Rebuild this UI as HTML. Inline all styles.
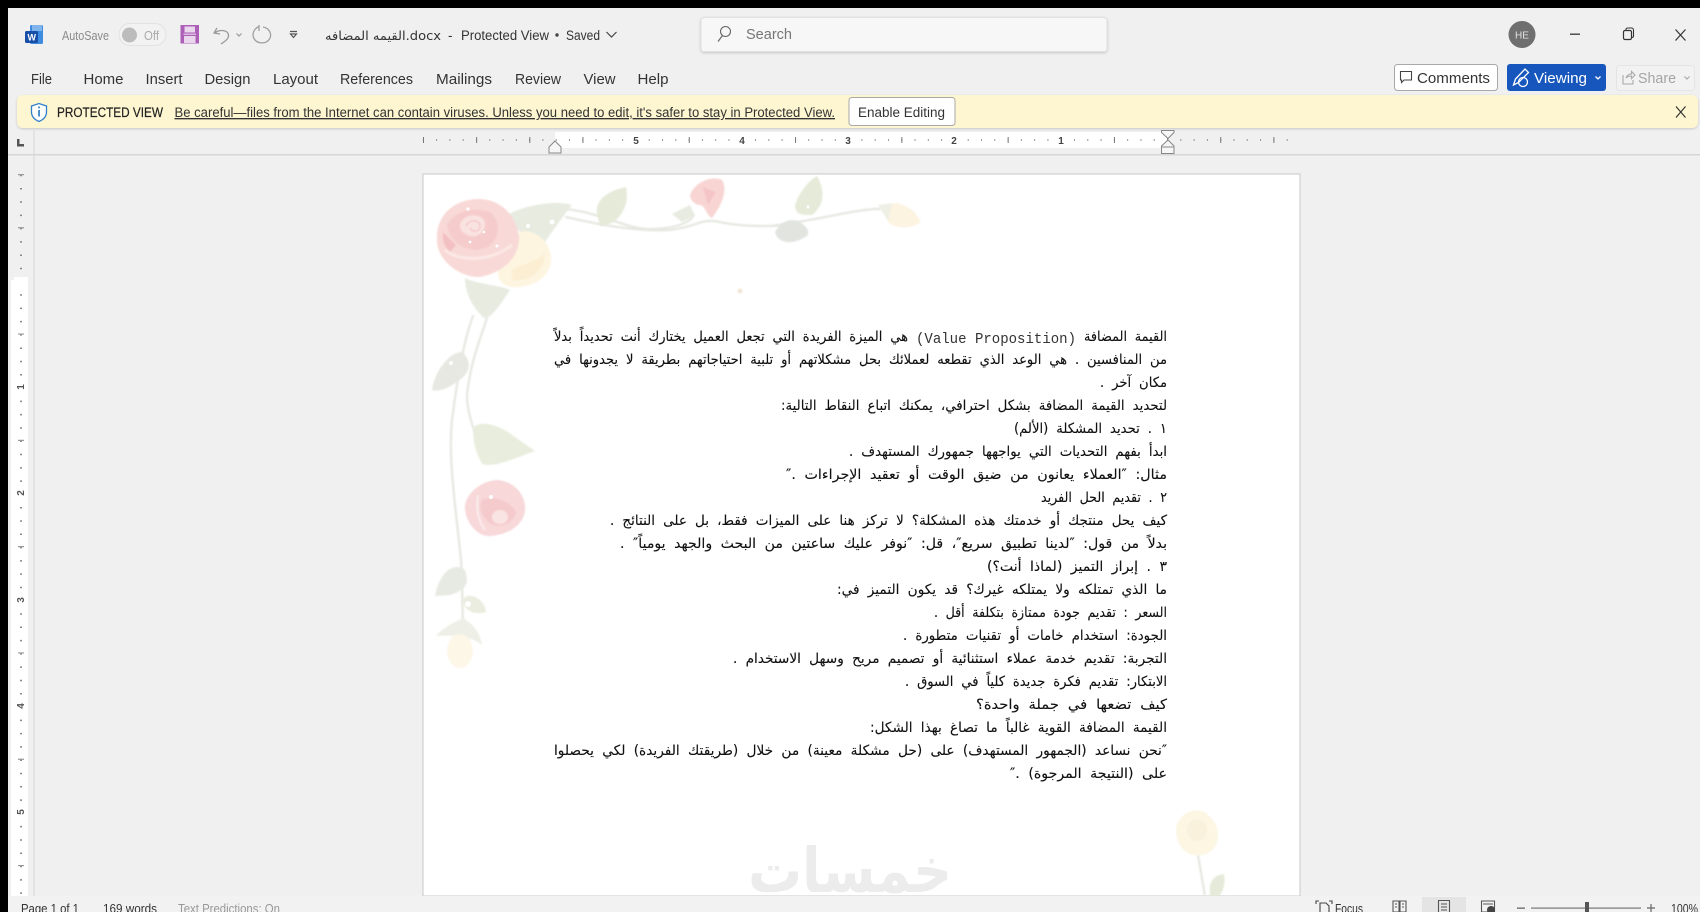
<!DOCTYPE html>
<html lang="en"><head><meta charset="utf-8"><title>Word</title>
<style>
html,body{margin:0;padding:0;width:1700px;height:912px;overflow:hidden;background:#000}
svg{display:block;position:absolute;left:0;top:0;filter:blur(.3px)}
.ui{font-family:"Liberation Sans",sans-serif;font-size:14px;fill:#333}
.ar{font-family:"DejaVu Sans","Liberation Serif",serif;font-size:14px;fill:#111;word-spacing:4px;stroke:#111;stroke-width:.12px}
.mono{font-family:"Liberation Mono",monospace;font-size:15px;fill:#333}
</style></head><body>
<svg width="1700" height="912" viewBox="0 0 1700 912" xmlns="http://www.w3.org/2000/svg">
<defs>
<filter id="b1" x="-20%" y="-20%" width="140%" height="140%"><feGaussianBlur stdDeviation=".8"/></filter>
<filter id="b2" x="-20%" y="-20%" width="140%" height="140%"><feGaussianBlur stdDeviation="2.2"/></filter>
<filter id="s" x="-5%" y="-20%" width="110%" height="150%"><feDropShadow dx="0" dy="1" stdDeviation="1.2" flood-color="#000" flood-opacity=".18"/></filter>
</defs>
<rect width="1700" height="912" fill="#000"/>
<rect x="8" y="8" width="1692" height="904" fill="#f0f0f0"/>

<!-- title bar -->
<rect x="30" y="25" width="13" height="19" rx="1.500" fill="#3f8be0"/>
<rect x="32" y="25" width="10" height="6" fill="#7fb4ec"/>
<rect x="25" y="31" width="13" height="12" rx="1.500" fill="#174fa8"/>
<text x="27.500" y="40.500" font-family="Liberation Sans" font-size="9" font-weight="700" fill="#fff">W</text>
<text class="ui" x="62" y="40" style="font-size:12.500px;fill:#8a8a8a" textLength="47" lengthAdjust="spacingAndGlyphs">AutoSave</text>
<rect x="119" y="23.500" width="47" height="22" rx="11" fill="#f2f2f2" stroke="#e2e2e2"/>
<circle cx="129.500" cy="35" r="7.500" fill="#bcbcbc"/>
<text class="ui" x="144" y="40" style="font-size:12.500px;fill:#ababab" textLength="15" lengthAdjust="spacingAndGlyphs">Off</text>
<rect x="180.500" y="25" width="18.500" height="18.500" fill="#ad5fb8"/>
<rect x="184.500" y="26.500" width="10.500" height="6" fill="#e9d6ec"/>
<rect x="184" y="36" width="11.500" height="7" fill="#e9d6ec"/>
<rect x="183.500" y="33.500" width="12.500" height="1.500" fill="#d9bbde"/>
<path d="M217 28 L214 33 L220 34 M214.500 33 C220 29 228 30 228.500 35 C229 39 224 42 221 44" fill="none" stroke="#9a9a9a" stroke-width="1.300"/>
<path d="M236.500 33.500l2.500 2.500 2.500-2.500" fill="none" stroke="#9a9a9a" stroke-width="1.200"/>
<path d="M259 26.500 C253 29 252 35 254 38.500 C257 44 266 44.500 269.500 39 C272.500 34 269 28 263 27 M259 25 L259 31" fill="none" stroke="#a0a0a0" stroke-width="1.300"/>
<path d="M290 31.500h7M290.500 34l3 3.500 3-3.500z" fill="none" stroke="#555" stroke-width="1.200"/>
<text class="ui" x="325" y="40" style="font-family:'DejaVu Sans','Liberation Sans',sans-serif;font-size:12.500px;fill:#333" textLength="116" lengthAdjust="spacingAndGlyphs">القيمه المضافه.docx</text>
<text class="ui" x="448" y="40" style="font-size:13.500px">-</text>
<text class="ui" x="461" y="40" style="font-size:13.500px" textLength="88" lengthAdjust="spacingAndGlyphs">Protected View</text>
<circle cx="557" cy="35" r="1.700" fill="#444"/>
<text class="ui" x="566" y="40" style="font-size:13.500px" textLength="34" lengthAdjust="spacingAndGlyphs">Saved</text>
<path d="M606.500 32l5 5 5-5" fill="none" stroke="#444" stroke-width="1.200"/>

<rect x="701" y="17.500" width="406" height="34" rx="3" fill="#f7f7f7" stroke="#e0e0e0" filter="url(#s)"/>
<circle cx="725.500" cy="31.500" r="5" fill="none" stroke="#666" stroke-width="1.100"/>
<path d="M722.500 35.500l-4.500 6" stroke="#666" stroke-width="1.200"/>
<text class="ui" x="746" y="39" style="font-size:14.500px;fill:#767676" textLength="46" lengthAdjust="spacingAndGlyphs">Search</text>

<circle cx="1522" cy="34.500" r="13.500" fill="#6f6f6f"/>
<text x="1522" y="38.500" text-anchor="middle" font-family="Liberation Sans" font-size="10" fill="#e4e4e4">HE</text>
<rect x="1570" y="33.500" width="10" height="1.400" fill="#444"/>
<rect x="1623.500" y="30.500" width="8" height="9" rx="1.500" fill="none" stroke="#333" stroke-width="1.200"/>
<path d="M1626 30 v-1 a1.500 1.500 0 0 1 1.500-1 h4 a2 2 0 0 1 2 2 v6 a1.500 1.500 0 0 1-1.500 1.500" fill="none" stroke="#333" stroke-width="1.100"/>
<path d="M1675.500 29.500l10 11M1685.500 29.500l-10 11" stroke="#333" stroke-width="1.200"/>

<!-- tabs -->
<text class="ui" style="font-size:15px" x="31" y="84" textLength="21" lengthAdjust="spacingAndGlyphs">File</text>
<text class="ui" style="font-size:15px" x="83.500" y="84" textLength="40" lengthAdjust="spacingAndGlyphs">Home</text>
<text class="ui" style="font-size:15px" x="145.500" y="84" textLength="37" lengthAdjust="spacingAndGlyphs">Insert</text>
<text class="ui" style="font-size:15px" x="204.500" y="84" textLength="46" lengthAdjust="spacingAndGlyphs">Design</text>
<text class="ui" style="font-size:15px" x="273" y="84" textLength="45" lengthAdjust="spacingAndGlyphs">Layout</text>
<text class="ui" style="font-size:15px" x="340" y="84" textLength="73" lengthAdjust="spacingAndGlyphs">References</text>
<text class="ui" style="font-size:15px" x="436" y="84" textLength="56" lengthAdjust="spacingAndGlyphs">Mailings</text>
<text class="ui" style="font-size:15px" x="515" y="84" textLength="46" lengthAdjust="spacingAndGlyphs">Review</text>
<text class="ui" style="font-size:15px" x="583.500" y="84" textLength="32" lengthAdjust="spacingAndGlyphs">View</text>
<text class="ui" style="font-size:15px" x="637.500" y="84" textLength="31" lengthAdjust="spacingAndGlyphs">Help</text>

<!-- right ribbon -->
<rect x="1394.500" y="64.500" width="103" height="26" rx="3" fill="#fff" stroke="#a8a8a8"/>
<path d="M1400.500 71.500h11v8.500h-7.500l-2.500 2.500v-2.500h-1z" fill="none" stroke="#444" stroke-width="1.100"/>
<text class="ui" x="1417" y="83" style="font-size:15px" textLength="73" lengthAdjust="spacingAndGlyphs">Comments</text>
<rect x="1507" y="64" width="99" height="27" rx="3" fill="#1757bd"/>
<path d="M1513.500 85 l2-6 9.500-10 3.500 3.500 -10 10z" fill="none" stroke="#fff" stroke-width="1.300"/>
<circle cx="1523" cy="82" r="4.500" fill="none" stroke="#fff" stroke-width="1.300"/>
<text class="ui" x="1534" y="83" style="font-size:15px;fill:#fff" textLength="53" lengthAdjust="spacingAndGlyphs">Viewing</text>
<path d="M1595.500 76.500l2.500 2.500 2.500-2.500" fill="none" stroke="#fff" stroke-width="1.300"/>
<rect x="1616.500" y="65.500" width="78" height="25" rx="3" fill="#f2f2f2" stroke="#e4e4e4"/>
<path d="M1623 75v9h10v-4M1626 78c1-3 3-4 5.500-4v-2.500l3.500 3.500-3.500 3.500v-2.500c-2.500 0-4 .5-5.500 2z" fill="none" stroke="#a8a8a8" stroke-width="1.100"/>
<text class="ui" x="1638" y="83" style="font-size:15px;fill:#a4a4a4" textLength="38" lengthAdjust="spacingAndGlyphs">Share</text>
<path d="M1684.500 76.500l2.500 2.500 2.500-2.500" fill="none" stroke="#aaa" stroke-width="1.200"/>

<!-- protected bar -->
<rect x="17" y="95" width="1681" height="33" rx="6" fill="#fdf6d0" filter="url(#s)"/>
<path d="M31.500 106 l7.500-2.500 7.500 2.500 v6 c0 5-4 8-7.500 9.500 c-3.500-1.500-7.500-4.500-7.500-9.500z" fill="#fff" stroke="#2f7fc9" stroke-width="1.300"/>
<rect x="38.200" y="110" width="1.700" height="6.500" fill="#2f7fc9"/><rect x="38.200" y="106.500" width="1.700" height="1.800" fill="#2f7fc9"/>
<text class="ui" x="57" y="117" style="font-size:13.500px;fill:#222" stroke="#222" stroke-width=".2" textLength="106" lengthAdjust="spacingAndGlyphs">PROTECTED VIEW</text>
<text class="ui" x="174.500" y="117" style="font-size:13.500px;text-decoration:underline;fill:#333" textLength="660.500" lengthAdjust="spacingAndGlyphs">Be careful—files from the Internet can contain viruses. Unless you need to edit, it's safer to stay in Protected View.</text>
<rect x="849" y="97.500" width="106" height="28" rx="3" fill="#fff" stroke="#a8a8a8"/>
<text class="ui" x="858" y="117" style="font-size:13.500px" textLength="87" lengthAdjust="spacingAndGlyphs">Enable Editing</text>
<path d="M1676 106.500l9.500 11M1685.500 106.500l-9.500 11" stroke="#333" stroke-width="1.200"/>

<!-- ruler area -->
<rect x="33" y="129" width="2" height="767" fill="#e3e3e3"/>
<rect x="8" y="154" width="1692" height="1.500" fill="#d6d6d6"/>
<path d="M17 139h2.500v5h4.500v2.500h-7z" fill="#555"/>
<rect x="555" y="132" width="612" height="16" fill="#fff"/>
<line x1="422.800" y1="140" x2="1290" y2="140" stroke="#777" stroke-width="1.500" stroke-dasharray="1 12.290"/>
<line x1="423" y1="140" x2="1290" y2="140" stroke="#777" stroke-width="6" stroke-dasharray="1 52.150"/>
<g font-family="Liberation Sans" font-size="10" font-weight="700" fill="#444" text-anchor="middle">
<rect x="631" y="133" width="10" height="14" fill="#fff"/><text x="636" y="144">5</text>
<rect x="737" y="133" width="10" height="14" fill="#fff"/><text x="742" y="144">4</text>
<rect x="843" y="133" width="10" height="14" fill="#fff"/><text x="848" y="144">3</text>
<rect x="949" y="133" width="10" height="14" fill="#fff"/><text x="954" y="144">2</text>
<rect x="1056" y="133" width="10" height="14" fill="#fff"/><text x="1061" y="144">1</text>
</g>
<path d="M555 141l6 6v6h-12v-6z" fill="#f6f6f6" stroke="#888"/>
<path d="M1161.500 130.500h12.500v2l-6 6-6.500-6zM1168 140l6 6v7.500h-12.500v-7.500zM1161.500 147h12.500" fill="#f6f6f6" stroke="#888"/>

<!-- vertical ruler -->
<rect x="11" y="280" width="17" height="616" fill="#fff"/>
<line x1="21" y1="174.700" x2="21" y2="896" stroke="#888" stroke-width="2" stroke-dasharray="1.500 11.790"/>
<line x1="21" y1="174" x2="21" y2="896" stroke="#999" stroke-width="6" stroke-dasharray="1.200 51.950"/>
<rect x="14" y="277" width="14" height="8" fill="#fff"/>
<g font-family="Liberation Sans" font-size="10" font-weight="700" fill="#555" text-anchor="middle">
<rect x="14" y="381" width="14" height="12" fill="#fff"/><text transform="translate(24 387) rotate(-90)">1</text>
<rect x="14" y="487" width="14" height="12" fill="#fff"/><text transform="translate(24 493) rotate(-90)">2</text>
<rect x="14" y="594" width="14" height="12" fill="#fff"/><text transform="translate(24 600) rotate(-90)">3</text>
<rect x="14" y="700" width="14" height="12" fill="#fff"/><text transform="translate(24 706) rotate(-90)">4</text>
<rect x="14" y="806" width="14" height="12" fill="#fff"/><text transform="translate(24 812) rotate(-90)">5</text>
</g>

<!-- page -->
<rect x="423" y="174" width="877" height="722" fill="#fff" stroke="#c9c9c9"/>

<!-- flowers -->
<g>
<g fill="none" stroke="#e6e8e1" stroke-width="2.300" stroke-linecap="round" filter="url(#b1)">
<path d="M565 209 C600 212 625 229 650 229 C680 229 700 218 690 212 M566 217 C600 225 640 232 670 230 C700 226 700 218 720 222 C745 228 790 226 800 224 M770 226 C810 222 860 208 880 209"/>
<path d="M473 316 C462 345 456 390 452 420 C448 460 456 510 461 560 C463 600 462 620 464 640"/>
<path d="M487 318 C478 345 470 365 467 395 C467 410 472 425 476 435"/>
<path d="M1198 855 L1205 896"/>
</g>
<g filter="url(#b1)">
<!-- leaves -->
<path d="M507 215 C525 205 555 200 572 205 C560 220 550 235 545 242 C530 240 515 232 507 215Z" fill="#e7ebe0"/>
<path d="M598 218 C592 198 612 190 626 187 C630 205 620 225 600 226Z" fill="#e6ead9"/>
<path d="M795 205 C800 190 810 180 817 176 C825 190 825 205 812 215 C802 215 795 215 795 205Z" fill="#e6ead9"/>
<path d="M775 232 C785 215 800 218 808 230 L808 235 C795 245 778 245 775 232Z" fill="#e1e4df"/>
<path d="M465 278 C480 285 500 285 510 290 C500 305 490 320 484 318 C470 305 465 290 465 278Z" fill="#e7ebe0"/>
<path d="M432 390 C435 370 450 352 462 352 C472 360 470 372 462 378 C450 388 440 392 432 390Z" fill="#e6e8e1"/>
<path d="M474 427 C480 420 500 425 512 435 L535 451 C515 458 495 468 482 464 C475 450 472 440 474 427Z" fill="#e9eddd"/>
<path d="M435 596 C440 570 455 562 465 570 C470 585 465 590 450 595Z" fill="#e7eae2"/>
<path d="M462 600 C470 590 485 600 486 612 C475 615 465 612 462 600Z" fill="#eaeddf"/>
<path d="M436 636 C445 625 460 620 463 618 C470 622 480 630 482 645 C470 635 450 635 436 636Z" fill="#eef0e7"/>
<path d="M1210 896 C1208 880 1215 875 1224 874 C1226 885 1222 895 1218 896Z" fill="#e6ead9"/>
<!-- yellow rose -->
<path d="M498 272 C505 255 512 232 525 231 C545 233 552 250 551 262 C548 280 530 288 512 287 C503 286 498 280 498 272Z" fill="#fdf5e0"/>
<path d="M512 270 C525 262 540 262 545 252 C545 270 530 282 512 280Z" fill="#fbeed2"/>
<!-- big rose -->
<path d="M437 240 C436 218 450 201 476 199 C498 198 515 212 519 236 C520 256 505 272 480 277 C462 278 437 262 437 240Z" fill="#f8d9d7"/>
<path d="M447 225 C455 210 475 207 490 212 C502 222 500 240 486 248 C470 254 450 245 447 225Z" fill="#f5cccb"/>
<path d="M460 225 C462 215 478 212 484 220 C488 230 478 238 470 236 C464 234 460 231 460 225Z" fill="#f9e3e1"/>
<path d="M445 250 C460 262 490 262 512 245" fill="none" stroke="#fbe9e6" stroke-width="3"/>
<path d="M466 226 C470 218 480 220 480 226 C480 232 472 233 470 228" fill="none" stroke="#f2c2c2" stroke-width="1.300"/>
<path d="M443 232 L456 245 L450 252 C444 246 442 240 443 232Z" fill="#f3c0c1"/>
<!-- buds -->
<path d="M690 195 C695 182 712 175 722 180 C728 190 722 205 712 218 C706 215 705 205 700 205 C695 205 690 200 690 195Z" fill="#f8d5d3"/>
<path d="M703 187 L716 192 L708 205 Z" fill="#f5c4c6"/>
<path d="M672 214 L690 205 L695 216 L682 222Z" fill="#e7ebe0"/>
<path d="M883 208 C890 200 905 203 915 213 L921 222 C910 230 895 228 888 222Z" fill="#fcf3e0"/>
<path d="M878 205 l14 -2 -4 18 z" fill="#eef0e6"/>
<!-- hanging rose -->
<path d="M465 505 C468 490 485 480 498 480 C515 482 526 495 525 510 C524 525 508 535 490 536 C478 537 464 522 465 505Z" fill="#f8d8d9"/>
<path d="M482 500 C492 495 510 500 516 512 C514 524 498 530 488 522 C482 515 478 508 482 500Z" fill="#f5cacc"/>
<ellipse cx="500" cy="517" rx="8" ry="7" fill="#fae4e3"/>
<path d="M478 495 C476 510 478 520 485 530" fill="none" stroke="#fbeceb" stroke-width="2"/>
<ellipse cx="460" cy="651" rx="13" ry="17" fill="#fdf7e8"/>
<!-- bottom right rose -->
<path d="M1176 828 C1180 812 1194 808 1204 812 C1218 820 1222 838 1214 848 C1206 858 1190 858 1182 848 C1177 842 1176 836 1176 828Z" fill="#fcf6e3"/>
<ellipse cx="1197" cy="830" rx="10" ry="11" fill="#faf1dc"/>
</g>
<g fill="#fff">
<circle cx="468" cy="209" r="1.600"/><circle cx="484" cy="232" r="1.300"/><circle cx="470" cy="242" r="1.400"/><circle cx="497" cy="246" r="1.500"/>
<circle cx="552" cy="222" r="2.500"/><circle cx="528" cy="226" r="2"/><circle cx="491" cy="497" r="2"/><circle cx="468" cy="604" r="3"/><circle cx="451" cy="363" r="2"/>
<circle cx="808" cy="207" r="1.500"/>
</g>
<circle cx="740" cy="291" r="2.500" fill="#f3e6d8" filter="url(#b1)"/>
</g>

<!-- watermark -->
<text x="748" y="892" font-family="DejaVu Sans" font-size="62" font-weight="700" fill="#ececec" textLength="204" lengthAdjust="spacingAndGlyphs" direction="ltr">خمسات</text>

<!-- document text -->
<g class="doc">
<text class="ar" direction="rtl" x="1167" y="341" textLength="83" lengthAdjust="spacingAndGlyphs">القيمة المضافة</text>
<text class="mono" x="916" y="343" textLength="160" lengthAdjust="spacingAndGlyphs">(Value Proposition)</text>
<text class="ar" direction="rtl" x="908" y="341" textLength="354" lengthAdjust="spacingAndGlyphs">هي الميزة الفريدة التي تجعل العميل يختارك أنت تحديداً بدلاً</text>
<text class="ar" direction="rtl" x="1167" y="364" textLength="613" lengthAdjust="spacingAndGlyphs">من المنافسين . هي الوعد الذي تقطعه لعملائك بحل مشكلاتهم أو تلبية احتياجاتهم بطريقة لا يجدونها في</text>
<text class="ar" direction="rtl" x="1167" y="387" textLength="67" lengthAdjust="spacingAndGlyphs">مكان آخر .</text>
<text class="ar" direction="rtl" x="1167" y="410" textLength="386" lengthAdjust="spacingAndGlyphs">لتحديد القيمة المضافة بشكل احترافي، يمكنك اتباع النقاط التالية:</text>
<text class="ar" direction="rtl" x="1167" y="433" textLength="153" lengthAdjust="spacingAndGlyphs">١ . تحديد المشكلة (الألم)</text>
<text class="ar" direction="rtl" x="1167" y="456" textLength="318" lengthAdjust="spacingAndGlyphs">ابدأ بفهم التحديات التي يواجهها جمهورك المستهدف .</text>
<text class="ar" direction="rtl" x="1167" y="479" textLength="381" lengthAdjust="spacingAndGlyphs">مثال: ″العملاء يعانون من ضيق الوقت أو تعقيد الإجراءات .″</text>
<text class="ar" direction="rtl" x="1167" y="502" textLength="126" lengthAdjust="spacingAndGlyphs">٢ . تقديم الحل الفريد</text>
<text class="ar" direction="rtl" x="1167" y="525" textLength="557" lengthAdjust="spacingAndGlyphs">كيف يحل منتجك أو خدمتك هذه المشكلة؟ لا تركز هنا على الميزات فقط، بل على النتائج .</text>
<text class="ar" direction="rtl" x="1167" y="548" textLength="547" lengthAdjust="spacingAndGlyphs">بدلاً من قول: ″لدينا تطبيق سريع″، قل: ″نوفر عليك ساعتين من البحث والجهد يومياً″ .</text>
<text class="ar" direction="rtl" x="1167" y="571" textLength="180" lengthAdjust="spacingAndGlyphs">٣ . إبراز التميز (لماذا أنت؟)</text>
<text class="ar" direction="rtl" x="1167" y="594" textLength="330" lengthAdjust="spacingAndGlyphs">ما الذي تمتلكه ولا يمتلكه غيرك؟ قد يكون التميز في:</text>
<text class="ar" direction="rtl" x="1167" y="617" textLength="233" lengthAdjust="spacingAndGlyphs">السعر : تقديم جودة ممتازة بتكلفة أقل .</text>
<text class="ar" direction="rtl" x="1167" y="640" textLength="264" lengthAdjust="spacingAndGlyphs">الجودة: استخدام خامات أو تقنيات متطورة .</text>
<text class="ar" direction="rtl" x="1167" y="663" textLength="434" lengthAdjust="spacingAndGlyphs">التجربة: تقديم خدمة عملاء استثنائية أو تصميم مريح وسهل الاستخدام .</text>
<text class="ar" direction="rtl" x="1167" y="686" textLength="262" lengthAdjust="spacingAndGlyphs">الابتكار: تقديم فكرة جديدة كلياً في السوق .</text>
<text class="ar" direction="rtl" x="1167" y="709" textLength="191" lengthAdjust="spacingAndGlyphs">كيف تضعها في جملة واحدة؟</text>
<text class="ar" direction="rtl" x="1167" y="732" textLength="297" lengthAdjust="spacingAndGlyphs">القيمة المضافة القوية غالباً ما تصاغ بهذا الشكل:</text>
<text class="ar" direction="rtl" x="1167" y="755" textLength="613" lengthAdjust="spacingAndGlyphs">″نحن نساعد (الجمهور المستهدف) على (حل مشكلة معينة) من خلال (طريقتك الفريدة) لكي يحصلوا</text>
<text class="ar" direction="rtl" x="1167" y="778" textLength="157" lengthAdjust="spacingAndGlyphs">على (النتيجة المرجوة) .″</text>
</g>

<!-- status bar -->
<rect x="8" y="896" width="1692" height="16" fill="#f2f2f2"/>
<rect x="1422" y="897" width="44" height="15" fill="#e4e4e4"/>
<text class="ui" x="21" y="913" style="font-size:12.500px" textLength="58" lengthAdjust="spacingAndGlyphs">Page 1 of 1</text>
<text class="ui" x="103" y="913" style="font-size:12.500px" textLength="54" lengthAdjust="spacingAndGlyphs">169 words</text>
<text class="ui" x="178" y="913" style="font-size:12.500px;fill:#999" textLength="102" lengthAdjust="spacingAndGlyphs">Text Predictions: On</text>
<path d="M1316 904v-3h3M1332 904v-3h-3M1320 912v-9h6l3 3v6" fill="none" stroke="#444" stroke-width="1.100"/>
<text class="ui" x="1335" y="913" style="font-size:12.500px" textLength="28" lengthAdjust="spacingAndGlyphs">Focus</text>
<path d="M1393 901h6v11h-6zM1400 901h6v11h-6zM1395 904h2M1395 907h2M1402 904h2M1402 907h2" fill="none" stroke="#555" stroke-width="1.100"/>
<path d="M1438.500 900.500h11v12h-11zM1441 904h6M1441 907h6M1441 910h6" fill="none" stroke="#555" stroke-width="1.100"/>
<path d="M1481.500 901h13v11h-13zM1483 904h10" fill="none" stroke="#555" stroke-width="1.100"/>
<circle cx="1491" cy="910" r="4" fill="#444"/>
<rect x="1517" y="907.500" width="8" height="1.300" fill="#666"/>
<rect x="1531" y="907.500" width="110" height="1.200" fill="#777"/>
<rect x="1585" y="902" width="4" height="10" fill="#555"/>
<path d="M1647 908h8M1651 904v8" stroke="#666" stroke-width="1.200"/>
<text class="ui" x="1671" y="913" style="font-size:12.500px" textLength="27" lengthAdjust="spacingAndGlyphs">100%</text>
</svg>
</body></html>
